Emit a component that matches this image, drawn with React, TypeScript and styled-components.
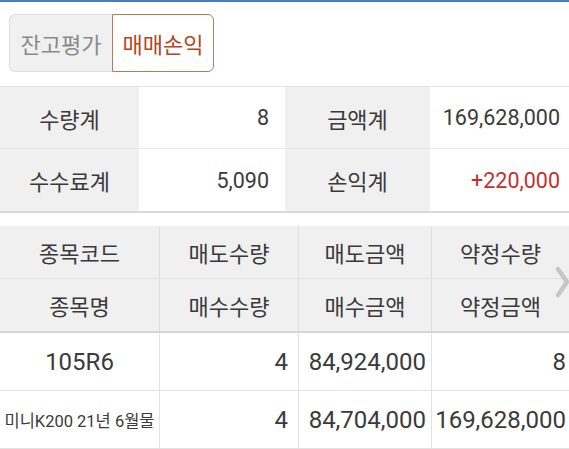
import React from 'react';
import styled, { createGlobalStyle } from 'styled-components';

const GlobalStyle = createGlobalStyle`
  body {
    margin: 0;
    background: #ffffff;
    font-family: Roboto, "Noto Sans CJK KR", "Noto Sans", sans-serif;
    color: #3a3a3a;
  }
`;

const Page = styled.div`
  width: 569px;
  height: 449px;
  overflow: hidden;
  position: relative;
  border-top: 2px solid #4a7cc0;
  box-sizing: border-box;
`;

const TabBar = styled.div`
  display: flex;
  padding: 12px 0 0 9px;
`;

const Tab = styled.div<{ $active?: boolean }>`
  width: ${p => (p.$active ? '102px' : '103px')};
  height: 58px;
  box-sizing: border-box;
  display: flex;
  align-items: center;
  justify-content: center;
  font-size: 22px;
  background: ${p => (p.$active ? '#ffffff' : '#f0f0f0')};
  color: ${p => (p.$active ? '#b4461c' : '#8a8a8a')};
  border: 1px solid ${p => (p.$active ? '#b97a5e' : '#dedede')};
  border-radius: ${p => (p.$active ? '0 6px 6px 0' : '6px 0 0 6px')};
  ${p => (p.$active ? '' : 'border-right: none;')}
`;

const Summary = styled.div`
  margin-top: 14px;
  display: grid;
  grid-template-columns: 139px 146px 145px 139px;
  grid-auto-rows: 62px;
  border-top: 1px solid #e4e4e4;
  border-bottom: 2px solid #d8d8d8;
`;

const SumCell = styled.div<{ $label?: boolean; $pad?: number; $red?: boolean; $last?: boolean }>`
  display: flex;
  align-items: center;
  justify-content: ${p => (p.$label ? 'center' : 'flex-end')};
  padding-right: ${p => p.$pad ?? 0}px;
  background: ${p => (p.$label ? '#f0f0f0' : '#ffffff')};
  color: ${p => (p.$red ? '#c4302b' : '#3a3a3a')};
  font-size: ${p => (p.$label ? '22px' : '21.5px')};
  border-bottom: ${p => (p.$last ? 'none' : '1px solid #e6e6e6')};
`;

const List = styled.div`
  margin-top: 13px;
  display: grid;
  grid-template-columns: 160px 139px 133px 137px;
`;

const HeadCell = styled.div<{ $bottom?: boolean }>`
  height: 52px;
  display: flex;
  align-items: center;
  justify-content: center;
  background: #f0f0f0;
  font-size: 22px;
  color: #3a3a3a;
  border-right: 1px solid #dedede;
  border-bottom: ${p => (p.$bottom ? '2px solid #d6d6d6' : '1px solid #e2e2e2')};
  &:nth-child(4n) {
    border-right: none;
  }
`;

const BodyCell = styled.div<{ $align?: 'center' | 'right'; $small?: boolean; $pad?: number }>`
  height: 57px;
  display: flex;
  align-items: center;
  justify-content: ${p => (p.$align === 'center' ? 'center' : 'flex-end')};
  padding-right: ${p => p.$pad ?? 0}px;
  font-size: ${p => (p.$small ? '16.5px' : '24px')};
  white-space: nowrap;
  color: #3a3a3a;
  border-right: 1px solid #e2e2e2;
  border-bottom: 1px solid #e2e2e2;
  &:nth-child(4n) {
    border-right: none;
  }
`;

const Chevron = styled.svg`
  position: absolute;
  right: 0;
  top: 263px;
`;

export default function App() {
  return (
    <>
      <GlobalStyle />
      <Page>
        <TabBar>
          <Tab>잔고평가</Tab>
          <Tab $active>매매손익</Tab>
        </TabBar>

        <Summary>
          <SumCell $label>수량계</SumCell>
          <SumCell $pad={16}>8</SumCell>
          <SumCell $label>금액계</SumCell>
          <SumCell $pad={9}>169,628,000</SumCell>
          <SumCell $label $last>수수료계</SumCell>
          <SumCell $pad={16} $last>5,090</SumCell>
          <SumCell $label $last>손익계</SumCell>
          <SumCell $pad={9} $red $last>+220,000</SumCell>
        </Summary>

        <List>
          <HeadCell>종목코드</HeadCell>
          <HeadCell>매도수량</HeadCell>
          <HeadCell>매도금액</HeadCell>
          <HeadCell>약정수량</HeadCell>
          <HeadCell $bottom>종목명</HeadCell>
          <HeadCell $bottom>매수수량</HeadCell>
          <HeadCell $bottom>매수금액</HeadCell>
          <HeadCell $bottom>약정금액</HeadCell>

          <BodyCell $align="center">105R6</BodyCell>
          <BodyCell $pad={10}>4</BodyCell>
          <BodyCell $pad={5}>84,924,000</BodyCell>
          <BodyCell $pad={3}>8</BodyCell>
          <BodyCell $align="center" $small>미니K200 21년 6월물</BodyCell>
          <BodyCell $pad={10}>4</BodyCell>
          <BodyCell $pad={5}>84,704,000</BodyCell>
          <BodyCell $pad={3}>169,628,000</BodyCell>
        </List>

        <Chevron width="14" height="34" viewBox="0 0 14 34">
          <polyline points="3,4 12,17 3,30" fill="none" stroke="#c6c6c6" strokeWidth="4.5" strokeLinecap="round" strokeLinejoin="round" />
        </Chevron>
      </Page>
    </>
  );
}
